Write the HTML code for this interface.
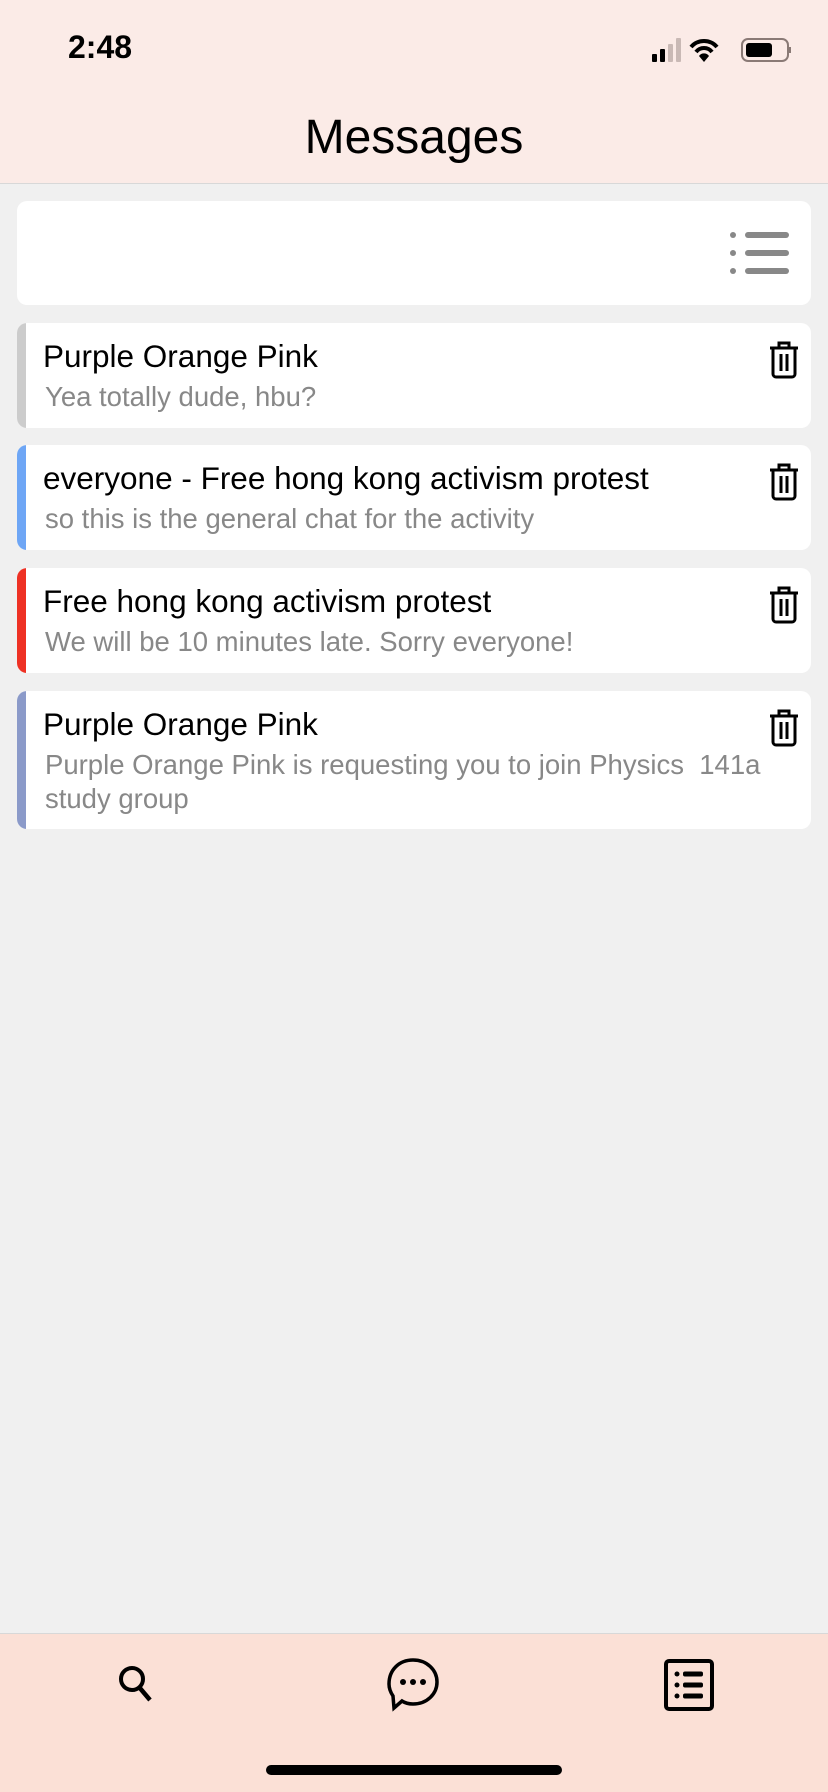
<!DOCTYPE html>
<html><head><meta charset="utf-8"><style>
*{margin:0;padding:0;box-sizing:border-box}
body{width:828px;height:1792px;background:#f0f0f0;font-family:"Liberation Sans",sans-serif;position:relative;overflow:hidden}
.hdr{position:absolute;left:0;top:0;width:828px;height:184px;background:#fbebe7;border-bottom:1px solid #d8d8d8}
.time{position:absolute;left:68px;top:29px;font-size:32px;font-weight:bold;color:#000}
.title{position:absolute;left:0;width:828px;top:110px;text-align:center;font-size:48px;color:#000}
.card{position:absolute;left:17px;width:794px;background:#fff;border-radius:10px;overflow:hidden}
.bar{position:absolute;left:0;top:0;bottom:0;width:9px}
.t{position:absolute;left:26px;top:15px;font-size:31.5px;color:#000;white-space:nowrap}
.s{position:absolute;left:28px;top:57px;font-size:27.5px;color:#888;line-height:34px;width:760px}
.trash{position:absolute;right:11px;top:18px}
.bot{position:absolute;left:0;top:1633px;width:828px;height:159px;background:#fbe0d6;border-top:1px solid #d8d8d8}
.home{position:absolute;left:266px;top:1765px;width:296px;height:10px;border-radius:5px;background:#000}
</style></head><body>
<div class="hdr">
<div class="time">2:48</div>
<svg style="position:absolute;left:652px;top:36px" width="140" height="28" viewBox="0 0 140 28">
<rect x="0" y="18" width="5" height="8" rx="1" fill="#000"/><rect x="8" y="13" width="5" height="13" rx="1" fill="#000"/>
<rect x="16" y="8" width="5" height="18" rx="1" fill="#c9b9b5"/><rect x="24" y="2" width="5" height="24" rx="1" fill="#c9b9b5"/>
<path d="M39 11 A17 17 0 0 1 65 11" stroke="#000" stroke-width="4" fill="none"/>
<path d="M44 16 A10 10 0 0 1 60 16" stroke="#000" stroke-width="4" fill="none"/>
<path d="M52 26 L47 20 A6 6 0 0 1 57 20 Z" fill="#000"/>
<rect x="90" y="3" width="46" height="22" rx="6" fill="none" stroke="#8a7a76" stroke-width="2"/>
<rect x="94" y="7" width="26" height="14" rx="3" fill="#000"/>
<rect x="137" y="11" width="2" height="6" fill="#8a7a76"/>
</svg>
<div class="title">Messages</div>
</div>

<div class="card" style="top:201px;height:104px">
<svg style="position:absolute;left:712px;top:30px" width="62" height="44" viewBox="0 0 62 44">
<g fill="#888"><circle cx="4" cy="4" r="3"/><circle cx="4" cy="22" r="3"/><circle cx="4" cy="40" r="3"/>
<rect x="16" y="1" width="44" height="6" rx="3"/><rect x="16" y="19" width="44" height="6" rx="3"/><rect x="16" y="37" width="44" height="6" rx="3"/></g></svg>
</div>

<div class="card" style="top:323px;height:105px"><div class="bar" style="background:#cccccc"></div>
<div class="t">Purple Orange Pink</div><div class="s">Yea totally dude, hbu?</div>
<svg class="trash" width="32" height="38" viewBox="0 0 32 38"><path d="M11 6 V2 H21 V6 M2 7 H30 M5 7 V33 a3 3 0 0 0 3 3 H24 a3 3 0 0 0 3 -3 V7 M13 13 V30 M19 13 V30" stroke="#000" stroke-width="3" fill="none"/></svg></div>

<div class="card" style="top:445px;height:105px"><div class="bar" style="background:#6ea6f5"></div>
<div class="t">everyone - Free hong kong activism protest</div><div class="s">so this is the general chat for the activity</div>
<svg class="trash" width="32" height="38" viewBox="0 0 32 38"><path d="M11 6 V2 H21 V6 M2 7 H30 M5 7 V33 a3 3 0 0 0 3 3 H24 a3 3 0 0 0 3 -3 V7 M13 13 V30 M19 13 V30" stroke="#000" stroke-width="3" fill="none"/></svg></div>

<div class="card" style="top:568px;height:105px"><div class="bar" style="background:#ee3124"></div>
<div class="t">Free hong kong activism protest</div><div class="s">We will be 10 minutes late. Sorry everyone!</div>
<svg class="trash" width="32" height="38" viewBox="0 0 32 38"><path d="M11 6 V2 H21 V6 M2 7 H30 M5 7 V33 a3 3 0 0 0 3 3 H24 a3 3 0 0 0 3 -3 V7 M13 13 V30 M19 13 V30" stroke="#000" stroke-width="3" fill="none"/></svg></div>

<div class="card" style="top:691px;height:138px"><div class="bar" style="background:#8b9ac9"></div>
<div class="t">Purple Orange Pink</div><div class="s">Purple Orange Pink is requesting you to join Physics&nbsp; 141a<br>study group</div>
<svg class="trash" width="32" height="38" viewBox="0 0 32 38"><path d="M11 6 V2 H21 V6 M2 7 H30 M5 7 V33 a3 3 0 0 0 3 3 H24 a3 3 0 0 0 3 -3 V7 M13 13 V30 M19 13 V30" stroke="#000" stroke-width="3" fill="none"/></svg></div>

<div class="bot">
<svg style="position:absolute;left:112px;top:26px" width="50" height="50" viewBox="0 0 50 50"><circle cx="20" cy="19" r="11" stroke="#000" stroke-width="4" fill="none"/><path d="M27 27 L38 40" stroke="#000" stroke-width="4.5"/></svg>
<svg style="position:absolute;left:383px;top:22px" width="60" height="60" viewBox="0 0 60 60"><path d="M30 4 C16 4 6 14 6 28 C6 33 8 37 10 40 L11 52 L19 45 C22 47 26 48 30 48 C44 48 54 38 54 26 C54 14 44 4 30 4 Z" stroke="#000" stroke-width="3.5" fill="none"/><circle cx="20" cy="26" r="3" fill="#000"/><circle cx="30" cy="26" r="3" fill="#000"/><circle cx="40" cy="26" r="3" fill="#000"/></svg>
<svg style="position:absolute;left:663px;top:24px" width="52" height="54" viewBox="0 0 52 54"><rect x="3" y="3" width="46" height="48" rx="3" stroke="#000" stroke-width="4" fill="none"/><g fill="#000"><circle cx="14" cy="16" r="2.5"/><circle cx="14" cy="27" r="2.5"/><circle cx="14" cy="38" r="2.5"/><rect x="20" y="13.5" width="20" height="5" rx="2"/><rect x="20" y="24.5" width="20" height="5" rx="2"/><rect x="20" y="35.5" width="20" height="5" rx="2"/></g></svg>
</div>
<div class="home"></div>
</body></html>
